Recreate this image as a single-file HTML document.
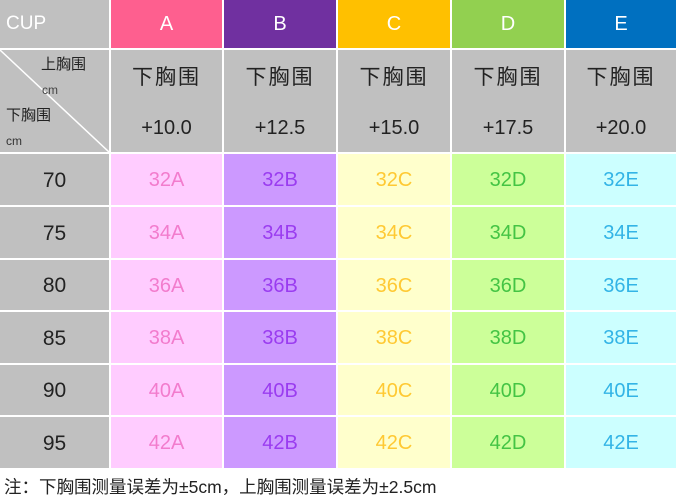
<!DOCTYPE html>
<html><head><meta charset="utf-8"><style>
body{margin:0;width:676px;height:500px;background:#fff;position:relative;overflow:hidden;font-family:"Liberation Sans","Noto Sans CJK SC",sans-serif}
.c{position:absolute;display:flex;align-items:center;justify-content:center;box-sizing:border-box}
.g{background:#c0c0c0;color:#222}
</style></head><body>
<div class="c" style="left:0;top:0;width:109px;height:48px;background:#c0c0c0;color:#fff;font-size:19px;justify-content:flex-start;padding-left:6px">CUP</div>
<div class="c" style="left:111px;top:0;width:111px;height:48px;background:#fe5f8f;color:#fff;font-size:20px">A</div>
<div class="c" style="left:224px;top:0;width:112px;height:48px;background:#7030a0;color:#fff;font-size:20px">B</div>
<div class="c" style="left:338px;top:0;width:112px;height:48px;background:#ffc000;color:#fff;font-size:20px">C</div>
<div class="c" style="left:452px;top:0;width:112px;height:48px;background:#92d050;color:#fff;font-size:20px">D</div>
<div class="c" style="left:566px;top:0;width:110px;height:48px;background:#0070c0;color:#fff;font-size:20px">E</div>

<div style="position:absolute;left:0;top:50px;width:109px;height:102px;background:#c0c0c0;overflow:hidden">
<svg width="109" height="102" style="position:absolute;left:0;top:0"><line x1="0" y1="0" x2="109" y2="102" stroke="#fff" stroke-width="1.5"/></svg>
<div style="position:absolute;left:41px;top:3px;font-size:15px;color:#222">上胸围</div>
<div style="position:absolute;left:42px;top:33px;font-size:12px;color:#444">cm</div>
<div style="position:absolute;left:6px;top:54px;font-size:15px;color:#222">下胸围</div>
<div style="position:absolute;left:6px;top:84px;font-size:12px;color:#333">cm</div>
</div>
<div id="h"></div>
<script>
var xs=[[111,111],[224,112],[338,112],[452,112],[566,110]];
var adds=["+10.0","+12.5","+15.0","+17.5","+20.0"];
var bg=["#ffccff","#cc99ff","#ffffcc","#ccff99","#ccffff"];
var fg=["#f27ccd","#9a3cf0","#ffc933","#44c444","#33b4e6"];
var L="ABCDE";
var rows=[154,207,260,312,365,417],rh=[51,51,50,51,50,51];
var h="";
for(var i=0;i<5;i++){
h+='<div class="c g" style="left:'+xs[i][0]+'px;top:50px;width:'+xs[i][1]+'px;height:102px;flex-direction:column;font-size:21px"><div style="margin-top:-2px;letter-spacing:2px">下胸围</div><div style="margin-top:26px;font-size:20px">'+adds[i]+'</div></div>';
}
for(var r=0;r<6;r++){
h+='<div class="c g" style="left:0;top:'+rows[r]+'px;width:109px;height:'+rh[r]+'px;font-size:21px;padding-top:2px">'+(70+5*r)+'</div>';
for(var i=0;i<5;i++){
h+='<div class="c" style="left:'+xs[i][0]+'px;top:'+rows[r]+'px;width:'+xs[i][1]+'px;height:'+rh[r]+'px;background:'+bg[i]+';color:'+fg[i]+';font-size:20px;padding-top:2px">'+(32+2*r)+L[i]+'</div>';
}}
document.getElementById('h').outerHTML=h;
</script>
<div style="position:absolute;left:4px;top:474px;font-size:17.5px;color:#222;white-space:nowrap">注：下胸围测量误差为±5cm，上胸围测量误差为±2.5cm</div>
</body></html>
